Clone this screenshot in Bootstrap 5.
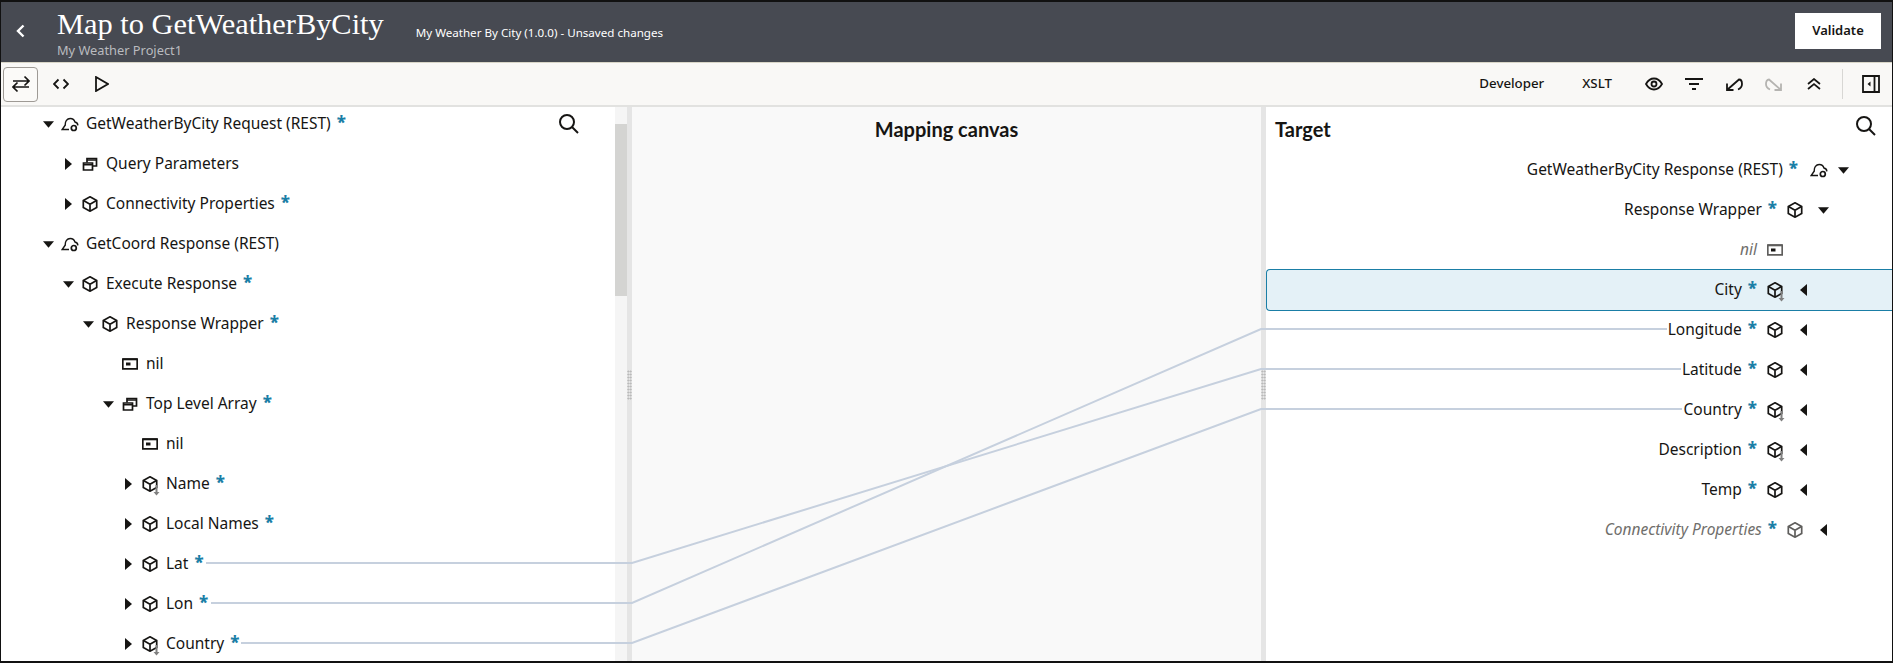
<!DOCTYPE html>
<html lang="en">
<head>
  <meta charset="UTF-8">
  <title>Map to GetWeatherByCity</title>
  <link href="https://cdn.jsdelivr.net/npm/bootstrap@5.3.0/dist/css/bootstrap.min.css" rel="stylesheet">
  <style>
    html, body {
      height: 663px;
      overflow: hidden;
    }

    body {
      position: relative;
      font-family: "Noto Sans", "Liberation Sans", sans-serif;
      font-size: 15.5px;
      color: #161513;
      background-color: #fff;
    }

    .frame-edge {
      position: absolute;
      inset: 0;
      border: solid #111;
      border-width: 2px 1px;
      pointer-events: none;
      z-index: 5;
    }

    .link-lines {
      position: absolute;
      inset: 0;
      width: 100%;
      height: 100%;
      pointer-events: none;
      z-index: 4;
    }

    .link-lines polyline {
      fill: none;
      stroke: #c6d0de;
      stroke-width: 2;
    }

    .app-head {
      height: 63px;
      background-color: #474a52;
      padding: 7px 12px 0 16px;
      border-bottom: 1px solid #d9d6c8;
    }

    .back-btn {
      width: 41px;
      height: 48px;
      color: #fff;
    }

    .app-title {
      font-family: "Liberation Serif", serif;
      font-size: 30.4px;
      line-height: 34px;
      color: #fff;
      margin: 0;
    }

    .app-sub {
      font-size: 12.8px;
      line-height: 16px;
      color: #b9bbbf;
      margin-top: 1px;
    }

    .app-state {
      font-size: 11.6px;
      color: #fff;
      margin-left: 32px;
      margin-top: 3px;
    }

    .app-side {
      height: 48px;
    }

    .btn.validate-btn {
      width: 86px;
      height: 36px;
      padding: 0;
      font-size: 13px;
      font-weight: 600;
      color: #161513;
      background-color: #fff;
      border: 0;
      border-radius: 0;
    }

    .tool-bar {
      height: 44px;
      background-color: #f9f8f6;
      border-bottom: 2px solid #e2e2e0;
      padding: 0 13px 0 3px;
    }

    .tool-icon {
      display: block;
      fill: none;
      stroke: #161513;
      stroke-width: 1.8;
    }

    .tool-toggle {
      width: 35px;
      height: 35px;
      border: 1px solid #9e9a95;
      border-radius: 4px;
      background-color: #fbfaf8;
    }

    .tool-code { margin-left: 15px; }
    .tool-play { margin-left: 26px; }

    .tool-word {
      font-size: 13.3px;
      font-weight: 500;
    }

    .tool-word.word-xslt { margin-left: 38px; margin-right: 33px; }

    .tool-gap { margin-right: 22px; }
    .tool-gap.gap-wide { margin-right: 24px; }
    .tool-icon.tool-off { stroke: #b5b4b1; }

    .tool-rule {
      width: 1px;
      height: 30px;
      background-color: #d8d7d4;
      margin: 0 19px 0 -1px;
    }

    .work-area {
      height: 556px;
    }

    .pane-source {
      width: 615px;
      position: relative;
      overflow: hidden;
    }

    .scroll-track {
      width: 12px;
      background-color: #f5f5f5;
    }

    .scroll-thumb {
      height: 172px;
      margin-top: 17px;
      background-color: #d4d4d2;
    }

    .pane-split {
      width: 5px;
      background-color: #e5e5e5;
    }

    .split-grip {
      width: 5px;
      height: 30px;
      background-image: radial-gradient(#b4b4b4 45%, transparent 50%);
      background-size: 2.5px 3px;
    }

    .pane-canvas {
      width: 629px;
      background-color: #f9f9f9;
    }

    .pane-heading {
      font-family: "Lato", "Noto Sans", sans-serif;
      font-size: 20px;
      font-weight: 700;
      line-height: 44px;
      margin: 0;
      color: #161513;
    }

    .pane-target {
      width: 627px;
      position: relative;
    }

    .pane-target .pane-heading {
      padding-left: 9px;
      height: 43px;
    }

    .search-ico {
      position: absolute;
      top: 7px;
      fill: none;
      stroke: #161513;
      stroke-width: 2;
    }

    .pane-source .search-ico { left: 558px; }
    .pane-target .search-ico { left: 589px; top: 9px; }

    .src-tree { margin-top: -3px; }

    .map-row {
      height: 40px;
    }

    .src-l0 { padding-left: 42px; }
    .src-l1 { padding-left: 62px; }
    .src-l2 { padding-left: 82px; }
    .src-l3 { padding-left: 102px; }
    .src-l4 { padding-left: 122px; }

    .caret-slot {
      width: 20px;
      flex: none;
    }

    .src-tree .caret-slot { padding-left: 3px; }
    .src-tree .caret-down { margin-left: -2px; }
    .tgt-tree .caret-slot { display: flex; justify-content: center; }

    .caret-ico {
      display: block;
      fill: #161513;
    }

    .node-ico {
      flex: none;
      display: block;
      overflow: visible;
      fill: none;
      stroke: #161513;
      stroke-width: 1.7;
      margin-right: 8px;
    }

    .cloud-ico {
      margin-left: -1px;
      margin-right: 7px;
      stroke-width: 1.4;
    }

    .node-ico .drop-arrow {
      stroke: #808080;
      stroke-width: 2;
    }

    .node-ico .drop-head {
      fill: #808080;
      stroke: none;
    }

    .req-star {
      color: #1a7ea6;
      font-weight: 800;
      font-size: 17px;
      line-height: 1;
      margin-left: 6px;
      margin-bottom: 3px;
    }

    .tgt-l0 { padding-right: 40px; }
    .tgt-l1 { padding-right: 60px; }
    .tgt-l2 { padding-right: 80px; }
    .tgt-nil { padding-right: 100px; }

    .tgt-tree .node-ico { margin-left: 10px; margin-right: 10px; }
    .tgt-tree .node-ico.cloud-ico { margin-left: 12px; margin-right: 5px; }

    .row-picked {
      height: 42px;
      margin: -1px 0;
      background-color: #e4f1f7;
      border: 1px solid #1a7ea6;
      border-right: 0;
      border-radius: 4px 0 0 4px;
    }

    .node-soft { color: #6f6e6b; font-style: italic; }
    .ico-soft { stroke: #5f5e5c; }
  </style>
</head>
<body>
  <svg width="0" height="0" class="position-absolute">
    <symbol id="i-cube" viewBox="0 0 16 16">
      <path d="M8 .8 14.700 4.500v7L8 15.200 1.300 11.500v-7Z"/>
      <path d="M1.500 4.600 8 8.300l6.500-3.700M8 8.300v6.800"/>
    </symbol>
    <symbol id="i-array" viewBox="0 0 16 16">
      <path d="M1.500 7h9v7h-9z"/>
      <path d="M5 6.500V2.500h9.500V10h-3.500"/>
      <path d="M1.500 8.800h9M5 4h9.500" stroke-width="1.400"/>
    </symbol>
    <symbol id="i-nil" viewBox="0 0 16 16">
      <path d="M.8 3.200h14.400v9.600H.8z"/>
      <path d="M.8 3.300h14.400" stroke-width="2"/>
      <path d="M4 6.500h4.500v3H4z" fill="#161513" stroke="none"/>
    </symbol>
    <symbol id="i-cloud" viewBox="0 0 18 15">
      <path d="M8 12.500H1.200L4.300 8C4 4.500 6 1.500 9.200 1.500c2.500 0 4.200 1.500 4.700 3.500 1.600.3 2.900 1.600 3 3.400"/>
      <circle cx="12.800" cy="11" r="2.500" stroke-width="1.700"/>
    </symbol>
    <symbol id="i-drop" viewBox="0 0 16 16">
      <use href="#i-cube" width="16" height="16"/>
    </symbol>
    <symbol id="i-down" viewBox="0 0 12 7"><path d="M0 0h12L6 7z"/></symbol>
    <symbol id="i-right" viewBox="0 0 7 12"><path d="M0 0v12l7-6z"/></symbol>
    <symbol id="i-left" viewBox="0 0 7 12"><path d="M7 0v12L0 6z"/></symbol>
  </svg>

  <div class="app-head d-flex align-items-start">
    <div class="back-btn d-flex align-items-center">
      <svg width="9" height="14" viewBox="0 0 9 14" fill="none" stroke="#fff" stroke-width="2.4"><path d="M7.500 1.500 2 7l5.500 5.500"/></svg>
    </div>
    <div>
      <h1 class="app-title">Map to GetWeatherByCity</h1>
      <div class="app-sub">My Weather Project1</div>
    </div>
    <div class="app-side d-flex align-items-center"><div class="app-state">My Weather By City (1.0.0) - Unsaved changes</div></div>
    <div class="app-side d-flex align-items-center ms-auto"><button type="button" class="btn validate-btn">Validate</button></div>
  </div>

  <div class="tool-bar d-flex align-items-center">
    <div class="tool-toggle d-flex align-items-center justify-content-center">
      <svg class="tool-icon" width="18" height="18" viewBox="0 0 18 18"><path d="M1 6h16M12.500 1.500 17 6l-4.500 4.500M17 12H1M5.500 7.500 1 12l4.500 4.500" stroke-width="1.700"/></svg>
    </div>
    <svg class="tool-icon tool-code" width="16" height="12" viewBox="0 0 16 12"><path d="M5.500 1.500 1 6l4.500 4.500M10.500 1.500 15 6l-4.500 4.500"/></svg>
    <svg class="tool-icon tool-play" width="14" height="16" viewBox="0 0 14 16"><path d="M1 1 13 8 1 15z"/></svg>

    <span class="tool-word ms-auto">Developer</span>
    <span class="tool-word word-xslt">XSLT</span>
    <svg class="tool-icon tool-gap" width="18" height="14" viewBox="0 0 18 14"><path d="M1 7c2-3.500 4.800-5.500 8-5.500S15 3.500 17 7c-2 3.500-4.800 5.500-8 5.500S3 10.500 1 7z"/><circle cx="9" cy="7" r="2.500"/></svg>
    <svg class="tool-icon tool-gap" width="18" height="12" viewBox="0 0 18 12"><path d="M0 1h18M4 6h10M7 11h4" stroke-width="1.800"/></svg>
    <svg class="tool-icon tool-gap" width="18" height="14" viewBox="0 0 18 14"><path d="M2 13 14 2.500c2 0 3 2 3 4.500 0 2.500-1.500 4.500-4 5.500M2 6.500V13h6.500"/></svg>
    <svg class="tool-icon tool-gap gap-wide tool-off" width="18" height="14" viewBox="0 0 18 14"><path d="M16 13 4 2.500C2 2.500 1 4.500 1 7c0 2.500 1.500 4.500 4 5.500M16 6.500V13H9.500"/></svg>
    <svg class="tool-icon tool-gap" width="14" height="12" viewBox="0 0 14 12"><path d="M1 6 7 1l6 5M1 11l6-5 6 5" stroke-width="1.700"/></svg>
    <div class="tool-rule"></div>
    <svg class="tool-icon" width="18" height="18" viewBox="0 0 18 18"><path d="M1 1h16v16H1zM12.500 1v16"/><path d="M8.500 6.500v5L5.500 9z" fill="#161513" stroke="none"/></svg>
  </div>

  <div class="work-area d-flex">
    <div class="pane-source">
      <div class="src-tree">
        <div class="map-row src-l0 d-flex align-items-center">
          <span class="caret-slot"><svg class="caret-ico caret-down" width="11" height="7"><use href="#i-down"/></svg></span>
          <svg class="node-ico cloud-ico" width="18" height="15"><use href="#i-cloud"/></svg>
          GetWeatherByCity Request (REST)<span class="req-star">*</span>
        </div>
        <div class="map-row src-l1 d-flex align-items-center">
          <span class="caret-slot"><svg class="caret-ico" width="7" height="12"><use href="#i-right"/></svg></span>
          <svg class="node-ico" width="16" height="16"><use href="#i-array"/></svg>
          Query Parameters
        </div>
        <div class="map-row src-l1 d-flex align-items-center">
          <span class="caret-slot"><svg class="caret-ico" width="7" height="12"><use href="#i-right"/></svg></span>
          <svg class="node-ico" width="16" height="16"><use href="#i-cube"/></svg>
          Connectivity Properties<span class="req-star">*</span>
        </div>
        <div class="map-row src-l0 d-flex align-items-center">
          <span class="caret-slot"><svg class="caret-ico caret-down" width="11" height="7"><use href="#i-down"/></svg></span>
          <svg class="node-ico cloud-ico" width="18" height="15"><use href="#i-cloud"/></svg>
          GetCoord Response (REST)
        </div>
        <div class="map-row src-l1 d-flex align-items-center">
          <span class="caret-slot"><svg class="caret-ico caret-down" width="11" height="7"><use href="#i-down"/></svg></span>
          <svg class="node-ico" width="16" height="16"><use href="#i-cube"/></svg>
          Execute Response<span class="req-star">*</span>
        </div>
        <div class="map-row src-l2 d-flex align-items-center">
          <span class="caret-slot"><svg class="caret-ico caret-down" width="11" height="7"><use href="#i-down"/></svg></span>
          <svg class="node-ico" width="16" height="16"><use href="#i-cube"/></svg>
          Response Wrapper<span class="req-star">*</span>
        </div>
        <div class="map-row src-l3 d-flex align-items-center">
          <span class="caret-slot"></span>
          <svg class="node-ico" width="16" height="16"><use href="#i-nil"/></svg>
          nil
        </div>
        <div class="map-row src-l3 d-flex align-items-center">
          <span class="caret-slot"><svg class="caret-ico caret-down" width="11" height="7"><use href="#i-down"/></svg></span>
          <svg class="node-ico" width="16" height="16"><use href="#i-array"/></svg>
          Top Level Array<span class="req-star">*</span>
        </div>
        <div class="map-row src-l4 d-flex align-items-center">
          <span class="caret-slot"></span>
          <svg class="node-ico" width="16" height="16"><use href="#i-nil"/></svg>
          nil
        </div>
        <div class="map-row src-l4 d-flex align-items-center">
          <span class="caret-slot"><svg class="caret-ico" width="7" height="12"><use href="#i-right"/></svg></span>
          <svg class="node-ico" width="16" height="16" viewBox="0 0 16 16"><use href="#i-cube" width="16" height="16"/><path class="drop-arrow" d="M14.500 9v8"/><path class="drop-head" d="M11.500 16h6l-3 3.500z"/></svg>
          Name<span class="req-star">*</span>
        </div>
        <div class="map-row src-l4 d-flex align-items-center">
          <span class="caret-slot"><svg class="caret-ico" width="7" height="12"><use href="#i-right"/></svg></span>
          <svg class="node-ico" width="16" height="16"><use href="#i-cube"/></svg>
          Local Names<span class="req-star">*</span>
        </div>
        <div class="map-row src-l4 d-flex align-items-center">
          <span class="caret-slot"><svg class="caret-ico" width="7" height="12"><use href="#i-right"/></svg></span>
          <svg class="node-ico" width="16" height="16"><use href="#i-cube"/></svg>
          Lat<span class="req-star">*</span>
        </div>
        <div class="map-row src-l4 d-flex align-items-center">
          <span class="caret-slot"><svg class="caret-ico" width="7" height="12"><use href="#i-right"/></svg></span>
          <svg class="node-ico" width="16" height="16"><use href="#i-cube"/></svg>
          Lon<span class="req-star">*</span>
        </div>
        <div class="map-row src-l4 d-flex align-items-center">
          <span class="caret-slot"><svg class="caret-ico" width="7" height="12"><use href="#i-right"/></svg></span>
          <svg class="node-ico" width="16" height="16" viewBox="0 0 16 16"><use href="#i-cube" width="16" height="16"/><path class="drop-arrow" d="M14.500 9v8"/><path class="drop-head" d="M11.500 16h6l-3 3.500z"/></svg>
          Country<span class="req-star">*</span>
        </div>
      </div>
      <svg class="search-ico" width="22" height="20" viewBox="0 0 22 20"><circle cx="9" cy="8" r="7"/><path d="M14 13l6 6"/></svg>
    </div>

    <div class="scroll-track"><div class="scroll-thumb"></div></div>
    <div class="pane-split d-flex align-items-center"><div class="split-grip"></div></div>

    <div class="pane-canvas">
      <h2 class="pane-heading text-center">Mapping canvas</h2>
    </div>

    <div class="pane-split d-flex align-items-center"><div class="split-grip"></div></div>

    <div class="pane-target">
      <h2 class="pane-heading">Target</h2>
      <svg class="search-ico" width="22" height="20" viewBox="0 0 22 20"><circle cx="9" cy="8" r="7"/><path d="M14 13l6 6"/></svg>
      <div class="tgt-tree">
        <div class="map-row tgt-l0 d-flex align-items-center justify-content-end">
          GetWeatherByCity Response (REST)<span class="req-star">*</span>
          <svg class="node-ico cloud-ico" width="18" height="15"><use href="#i-cloud"/></svg>
          <span class="caret-slot"><svg class="caret-ico" width="11" height="7"><use href="#i-down"/></svg></span>
        </div>
        <div class="map-row tgt-l1 d-flex align-items-center justify-content-end">
          Response Wrapper<span class="req-star">*</span>
          <svg class="node-ico" width="16" height="16"><use href="#i-cube"/></svg>
          <span class="caret-slot"><svg class="caret-ico" width="11" height="7"><use href="#i-down"/></svg></span>
        </div>
        <div class="map-row tgt-nil d-flex align-items-center justify-content-end">
          <span class="node-soft">nil</span>
          <svg class="node-ico ico-soft" width="16" height="16"><use href="#i-nil"/></svg>
        </div>
        <div class="map-row row-picked tgt-l2 d-flex align-items-center justify-content-end">
          City<span class="req-star">*</span>
          <svg class="node-ico" width="16" height="16" viewBox="0 0 16 16"><use href="#i-cube" width="16" height="16"/><path class="drop-arrow" d="M14.500 9v8"/><path class="drop-head" d="M11.500 16h6l-3 3.500z"/></svg>
          <span class="caret-slot"><svg class="caret-ico" width="7" height="12"><use href="#i-left"/></svg></span>
        </div>
        <div class="map-row tgt-l2 d-flex align-items-center justify-content-end">
          Longitude<span class="req-star">*</span>
          <svg class="node-ico" width="16" height="16"><use href="#i-cube"/></svg>
          <span class="caret-slot"><svg class="caret-ico" width="7" height="12"><use href="#i-left"/></svg></span>
        </div>
        <div class="map-row tgt-l2 d-flex align-items-center justify-content-end">
          Latitude<span class="req-star">*</span>
          <svg class="node-ico" width="16" height="16"><use href="#i-cube"/></svg>
          <span class="caret-slot"><svg class="caret-ico" width="7" height="12"><use href="#i-left"/></svg></span>
        </div>
        <div class="map-row tgt-l2 d-flex align-items-center justify-content-end">
          Country<span class="req-star">*</span>
          <svg class="node-ico" width="16" height="16" viewBox="0 0 16 16"><use href="#i-cube" width="16" height="16"/><path class="drop-arrow" d="M14.500 9v8"/><path class="drop-head" d="M11.500 16h6l-3 3.500z"/></svg>
          <span class="caret-slot"><svg class="caret-ico" width="7" height="12"><use href="#i-left"/></svg></span>
        </div>
        <div class="map-row tgt-l2 d-flex align-items-center justify-content-end">
          Description<span class="req-star">*</span>
          <svg class="node-ico" width="16" height="16" viewBox="0 0 16 16"><use href="#i-cube" width="16" height="16"/><path class="drop-arrow" d="M14.500 9v8"/><path class="drop-head" d="M11.500 16h6l-3 3.500z"/></svg>
          <span class="caret-slot"><svg class="caret-ico" width="7" height="12"><use href="#i-left"/></svg></span>
        </div>
        <div class="map-row tgt-l2 d-flex align-items-center justify-content-end">
          Temp<span class="req-star">*</span>
          <svg class="node-ico" width="16" height="16"><use href="#i-cube"/></svg>
          <span class="caret-slot"><svg class="caret-ico" width="7" height="12"><use href="#i-left"/></svg></span>
        </div>
        <div class="map-row tgt-l1 d-flex align-items-center justify-content-end">
          <span class="node-soft">Connectivity Properties</span><span class="req-star">*</span>
          <svg class="node-ico ico-soft" width="16" height="16"><use href="#i-cube"/></svg>
          <span class="caret-slot"><svg class="caret-ico" width="7" height="12"><use href="#i-left"/></svg></span>
        </div>
      </div>
    </div>
  </div>

  <!-- links between source and target nodes -->
  <svg class="link-lines">
    <polyline points="206,563 632,563 1261,369 1681,369"/>
    <polyline points="211,603 632,603 1261,329 1667,329"/>
    <polyline points="241,643 632,643 1261,409 1682,409"/>
  </svg>
  <div class="frame-edge"></div>
</body>
</html>
